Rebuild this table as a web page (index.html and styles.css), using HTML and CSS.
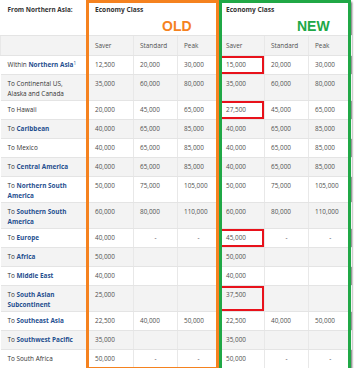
FILE: index.html
```html
<!DOCTYPE html>
<html lang="en">
<head>
  <meta charset="UTF-8" />
  <title>Award chart - From Northern Asia</title>
  <link rel="stylesheet" href="styles.css">
</head>
<body>
  <div class="shot">
    <table class="chart">
      <colgroup>
        <col class="c-dest"><col class="c-a"><col class="c-b"><col class="c-c"><col class="c-a"><col class="c-b"><col class="c-d">
      </colgroup>
      <tr class="head">
        <th class="dest">From Northern Asia:</th>
        <th colspan="3" class="cls">Economy Class</th>
        <th colspan="3" class="cls">Economy Class</th>
      </tr>
      <tr class="sub alt">
        <td></td>
        <td>Saver</td><td>Standard</td><td>Peak</td>
        <td>Saver</td><td>Standard</td><td>Peak</td>
      </tr>
      <tr>
        <td class="dest">Within <a href="#">Northern Asia</a><sup>1</sup></td>
        <td>12,500</td><td>20,000</td><td>30,000</td>
        <td class="hit">15,000</td><td>20,000</td><td>30,000</td>
      </tr>
      <tr class="alt two">
        <td class="dest">To Continental US,<br>Alaska and Canada</td>
        <td>35,000</td><td>60,000</td><td>80,000</td>
        <td>35,000</td><td>60,000</td><td>80,000</td>
      </tr>
      <tr>
        <td class="dest">To Hawaii</td>
        <td>20,000</td><td>45,000</td><td>65,000</td>
        <td class="hit">27,500</td><td>45,000</td><td>65,000</td>
      </tr>
      <tr class="alt">
        <td class="dest">To <a href="#">Caribbean</a></td>
        <td>40,000</td><td>65,000</td><td>85,000</td>
        <td>40,000</td><td>65,000</td><td>85,000</td>
      </tr>
      <tr>
        <td class="dest">To Mexico</td>
        <td>40,000</td><td>65,000</td><td>85,000</td>
        <td>40,000</td><td>65,000</td><td>85,000</td>
      </tr>
      <tr class="alt">
        <td class="dest">To <a href="#">Central America</a></td>
        <td>40,000</td><td>65,000</td><td>85,000</td>
        <td>40,000</td><td>65,000</td><td>85,000</td>
      </tr>
      <tr class="two">
        <td class="dest">To <a href="#">Northern South<br>America</a></td>
        <td>50,000</td><td>75,000</td><td>105,000</td>
        <td>50,000</td><td>75,000</td><td>105,000</td>
      </tr>
      <tr class="alt two">
        <td class="dest">To <a href="#">Southern South<br>America</a></td>
        <td>60,000</td><td>80,000</td><td>110,000</td>
        <td>60,000</td><td>80,000</td><td>110,000</td>
      </tr>
      <tr>
        <td class="dest">To <a href="#">Europe</a></td>
        <td>40,000</td><td class="na">-</td><td class="na">-</td>
        <td class="hit">45,000</td><td class="na">-</td><td class="na">-</td>
      </tr>
      <tr class="alt">
        <td class="dest">To <a href="#">Africa</a></td>
        <td>50,000</td><td></td><td></td>
        <td>50,000</td><td></td><td></td>
      </tr>
      <tr>
        <td class="dest">To <a href="#">Middle East</a></td>
        <td>40,000</td><td></td><td></td>
        <td>40,000</td><td></td><td></td>
      </tr>
      <tr class="alt two">
        <td class="dest">To <a href="#">South Asian<br>Subcontinent</a></td>
        <td>25,000</td><td></td><td></td>
        <td class="hit">37,500</td><td></td><td></td>
      </tr>
      <tr>
        <td class="dest">To <a href="#">Southeast Asia</a></td>
        <td>22,500</td><td>40,000</td><td>50,000</td>
        <td>22,500</td><td>40,000</td><td>50,000</td>
      </tr>
      <tr class="alt">
        <td class="dest">To <a href="#">Southwest Pacific</a></td>
        <td>35,000</td><td></td><td></td>
        <td>35,000</td><td></td><td></td>
      </tr>
      <tr>
        <td class="dest">To South Africa</td>
        <td>50,000</td><td class="na">-</td><td class="na">-</td>
        <td>50,000</td><td class="na">-</td><td class="na">-</td>
      </tr>
    </table>

    <div class="frame old"><span class="tag">OLD</span></div>
    <div class="frame new"><span class="tag">NEW</span></div>
  </div>
</body>
</html>
```

FILE: styles.css
```css
body {
  margin: 0;
  background: #fff;
  font-family: 'Open Sans', 'Segoe UI', sans-serif;
}
.shot {
  position: relative;
  width: 351px;
  height: 368px;
  background: #fff;
  box-shadow: 1px 2px 2px rgba(0, 0, 0, 0.6);
}
.chart {
  width: 351px;
  table-layout: fixed;
  border-collapse: collapse;
  font-size: 6.4px;
  line-height: 10px;
  color: #505050;
}
.c-dest { width: 88px; }
.c-a { width: 45px; }
.c-b { width: 44px; }
.c-c { width: 42px; }
.c-d { width: 43px; }

.chart th, .chart td {
  padding: 4px 6px 0;
  text-align: left;
  vertical-align: top;
  border-bottom: 1px solid #e4e4e4;
  border-left: 1px solid #e8e8e8;
  white-space: nowrap;
  overflow: hidden;
}
.chart tr { height: 19px; }
.chart tr.two { height: 26px; }
.chart tr.head { height: 35px; }
.chart tr.sub { height: 20px; }
.chart tr.sub td { padding-top: 5px; }
.chart tr.alt { background: #f3f3f3; }

.chart th {
  font-weight: bold;
  color: #333;
  padding-top: 5px;
}
.chart th.cls {
  font-size: 6.6px;
}
.chart .dest {
  border-left: none;
  padding-left: 7px;
  padding-right: 2px;
  color: #333;
}
.chart a {
  color: #1f4f8f;
  font-weight: bold;
  text-decoration: none;
}
.chart sup {
  font-size: 4.5px;
  line-height: 0;
  vertical-align: 2px;
  color: #1f4f8f;
}
.chart td.na {
  text-align: center;
}
.chart td.hit {
  box-shadow: inset 0 0 0 2px #e8121b;
}

.frame {
  position: absolute;
  top: 0;
  box-sizing: border-box;
  border: 3px solid;
}
.frame.old {
  left: 86px;
  width: 133px;
  height: 370px;
  border-color: #f5821f;
  color: #f5821f;
}
.frame.new {
  left: 219px;
  width: 132px;
  height: 371px;
  border-color: #20a846;
  color: #20a846;
}
.tag {
  display: block;
  margin-top: 16px;
  font-family: 'Liberation Sans', sans-serif;
  font-size: 14px;
  font-weight: bold;
  line-height: 14px;
}
.old .tag { padding-left: 73px; }
.new .tag { padding-left: 75px; }
```
